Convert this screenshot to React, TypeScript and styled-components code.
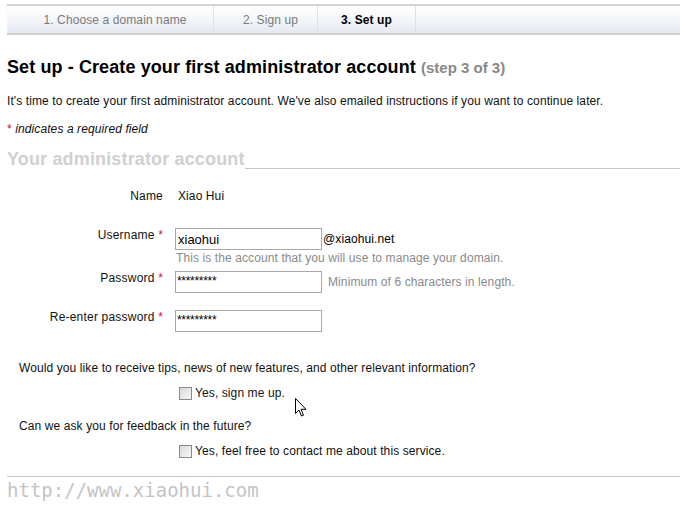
import React from "react";
import styled, { createGlobalStyle } from "styled-components";

const Global = createGlobalStyle`
  html, body { margin: 0; padding: 0; background: #fff; }
  body { font-family: "Liberation Sans", Arial, sans-serif; font-size: 12px; color: #222; letter-spacing: 0.1px; }
`;

const Page = styled.div`
  position: relative;
  width: 680px;
  height: 510px;
  padding-left: 7px;
  box-sizing: border-box;
  overflow: hidden;
`;

const TabBar = styled.div`
  margin-top: 4px;
  height: 27px;
  display: flex;
  border-top: 2px solid #d4d4d4;
  border-bottom: 2px solid #d0d0d0;
  background: linear-gradient(#ffffff, #f4f6f9 50%, #e4e8f0);
`;

const Tab = styled.div<{ $w: number; $active?: boolean }>`
  width: ${(p) => p.$w}px;
  box-sizing: border-box;
  display: flex;
  align-items: center;
  justify-content: center;
  border-right: 1px solid #dce2ec;
  color: ${(p) => (p.$active ? "#000" : "#7a7a7a")};
  font-weight: ${(p) => (p.$active ? "bold" : "normal")};
  font-size: 12px;
  padding-left: ${(p) => (p.$active ? 0 : 10)}px;
`;

const Title = styled.h1`
  margin: 21px 0 0;
  font-size: 18px;
  font-weight: bold;
  color: #000;
  line-height: 22px;
  letter-spacing: 0.1px;
`;

const Step = styled.span`
  font-size: 15px;
  color: #888;
  letter-spacing: 0;
`;

const Para = styled.p`
  margin: 14px 0 0;
  line-height: 16px;
  color: #111;
`;

const Note = styled.p`
  margin: 12px 0 0;
  font-style: italic;
  line-height: 16px;
  color: #111;
`;

const Star = styled.span`
  color: #c8143c;
  font-style: normal;
`;

const SectionHead = styled.div`
  margin-top: 11px;
  display: flex;
  align-items: flex-end;
`;

const SectionTitle = styled.span`
  font-size: 18px;
  font-weight: bold;
  color: #d0d0d0;
  line-height: 22px;
  letter-spacing: 0.15px;
`;

const SectionRule = styled.div`
  flex: 1;
  border-bottom: 1px solid #c8c8c8;
  margin-bottom: 1px;
`;

const Form = styled.div`
  margin-top: 18px;
  display: grid;
  grid-template-columns: 156px 1fr;
  column-gap: 12px;
`;

const Label = styled.div<{ $mt?: number }>`
  text-align: right;
  line-height: 16px;
  margin-top: ${(p) => p.$mt ?? 0}px;
  color: #111;
  letter-spacing: 0.2px;
`;

const Field = styled.div<{ $mt?: number }>`
  margin-top: ${(p) => p.$mt ?? 0}px;
  display: flex;
  flex-direction: column;
`;

const FieldLine = styled.div`
  display: flex;
  align-items: center;
`;

const Value = styled.div`
  line-height: 16px;
  padding-left: 3px;
  color: #111;
`;

const Input = styled.input<{ $masked?: boolean }>`
  width: 147px;
  height: 22px;
  box-sizing: border-box;
  border: 1px solid #a8a8a8;
  padding: ${(p) => (p.$masked ? "0 0 3px 1px" : "0 2px")};
  margin: 0;
  font-family: "Liberation Sans", Arial, sans-serif;
  font-size: ${(p) => (p.$masked ? 12 : 13)}px;
  letter-spacing: ${(p) => (p.$masked ? "-0.3px" : "0")};
  color: #000;
  outline: none;
`;

const Suffix = styled.span`
  margin-left: 1px;
  color: #000;
  font-size: 12px;
`;

const Hint = styled.span<{ $ml?: number }>`
  color: #8a8a8a;
  margin-left: ${(p) => p.$ml ?? 0}px;
  line-height: 16px;
`;

const Question = styled.p<{ $mt: number }>`
  margin: ${(p) => p.$mt}px 0 0 12px;
  line-height: 16px;
  color: #111;
`;

const CheckRow = styled.label`
  margin: 9px 0 0 172px;
  display: flex;
  align-items: center;
  line-height: 16px;
  color: #111;
`;

const Box = styled.input`
  appearance: none;
  width: 13px;
  height: 13px;
  margin: 0 3px 0 0;
  border: 1px solid #8a8a8a;
  background: linear-gradient(135deg, #d8d8d8, #f8f8f8);
  box-sizing: border-box;
`;

const Footer = styled.div`
  margin-top: 17px;
  border-top: 1px solid #c8c8c8;
  padding-top: 1px;
`;

const Watermark = styled.div`
  font-family: "DejaVu Sans Mono", monospace;
  font-size: 19px;
  color: #c4c4c4;
  line-height: 24px;
  letter-spacing: 0;
`;

const Cursor = styled.svg`
  position: absolute;
  left: 295px;
  top: 398px;
`;

export default function App() {
  return (
    <>
      <Global />
      <Page>
        <TabBar>
          <Tab $w={207}>1. Choose a domain name</Tab>
          <Tab $w={104}>2. Sign up</Tab>
          <Tab $w={98} $active>3. Set up</Tab>
        </TabBar>
        <Title>
          Set up - Create your first administrator account <Step>(step 3 of 3)</Step>
        </Title>
        <Para>
          It's time to create your first administrator account. We've also emailed instructions if you want to continue later.
        </Para>
        <Note>
          <Star>*</Star> indicates a required field
        </Note>
        <SectionHead>
          <SectionTitle>Your administrator account</SectionTitle>
          <SectionRule />
        </SectionHead>
        <Form>
          <Label $mt={0}>Name</Label>
          <Field $mt={0}>
            <Value>Xiao Hui</Value>
          </Field>

          <Label $mt={23}>
            Username <Star>*</Star>
          </Label>
          <Field $mt={24}>
            <FieldLine>
              <Input type="text" defaultValue="xiaohui" />
              <Suffix>@xiaohui.net</Suffix>
            </FieldLine>
            <Hint $ml={1}>This is the account that you will use to manage your domain.</Hint>
          </Field>

          <Label $mt={4}>
            Password <Star>*</Star>
          </Label>
          <Field $mt={5}>
            <FieldLine>
              <Input type="text" $masked defaultValue="*********" />
              <Hint $ml={6}>Minimum of 6 characters in length.</Hint>
            </FieldLine>
          </Field>

          <Label $mt={16}>
            Re-enter password <Star>*</Star>
          </Label>
          <Field $mt={17}>
            <FieldLine>
              <Input type="text" $masked defaultValue="*********" />
            </FieldLine>
          </Field>
        </Form>
        <Question $mt={28}>Would you like to receive tips, news of new features, and other relevant information?</Question>
        <CheckRow>
          <Box type="checkbox" />
          Yes, sign me up.
        </CheckRow>
        <Question $mt={17}>Can we ask you for feedback in the future?</Question>
        <CheckRow>
          <Box type="checkbox" />
          Yes, feel free to contact me about this service.
        </CheckRow>
        <Footer>
          <Watermark>http://www.xiaohui.com</Watermark>
        </Footer>
        <Cursor width="13" height="20" viewBox="0 0 13 20">
          <path d="M0.5 0.5 L0.5 15.5 L4 12 L6.5 18 L8.5 17.2 L6 11.3 L11 11.3 Z" fill="#fff" stroke="#000" strokeWidth="1" strokeLinejoin="round" />
        </Cursor>
      </Page>
    </>
  );
}
